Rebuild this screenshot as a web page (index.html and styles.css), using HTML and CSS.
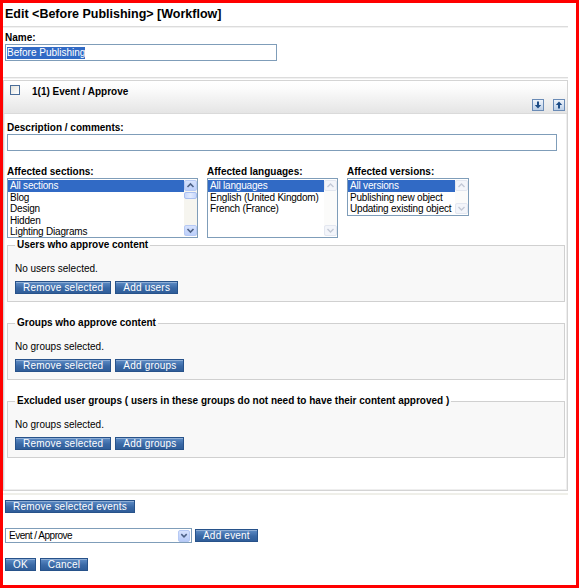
FILE: index.html
```html
<!DOCTYPE html>
<html>
<head>
<meta charset="utf-8">
<title>Edit workflow</title>
<link rel="stylesheet" href="styles.css">
</head>
<body>
<div class="page">
  <h1 class="title">Edit &lt;Before Publishing&gt; [Workflow]</h1>
  <div class="rule"></div>
  <div class="lbl name-lbl">Name:</div>
  <div class="input name-input"><span class="sel-text">Before Publishing</span></div>
  <div class="rule rule-2"></div>

  <div class="event">
    <div class="event-head">
      <div class="head-row">
        <span class="checkbox"></span>
        <span class="event-title">1(1) Event / Approve</span>
      </div>
      <div class="move-row">
        <svg class="move" width="12" height="12" viewBox="0 0 12 12">
          <defs><linearGradient id="mg1" x1="0" y1="0" x2="0" y2="1"><stop offset="0" stop-color="#f2f6fc"/><stop offset="1" stop-color="#b9cde6"/></linearGradient></defs>
          <rect x="0.5" y="0.5" width="11" height="11" fill="url(#mg1)" stroke="#6a8bb6"/>
          <path d="M5 2.5h2v3.5h2.2l-3.2 3.6-3.2-3.6h2.2z" fill="#1d4c86"/>
        </svg>
        <svg class="move" width="12" height="12" viewBox="0 0 12 12">
          <defs><linearGradient id="mg2" x1="0" y1="0" x2="0" y2="1"><stop offset="0" stop-color="#f2f6fc"/><stop offset="1" stop-color="#b9cde6"/></linearGradient></defs>
          <rect x="0.5" y="0.5" width="11" height="11" fill="url(#mg2)" stroke="#6a8bb6"/>
          <path d="M5 9.5h2v-3.5h2.2l-3.2-3.6-3.2 3.6h2.2z" fill="#1d4c86"/>
        </svg>
      </div>
    </div>

    <div class="event-body">
      <div class="lbl">Description / comments:</div>
      <div class="input desc-input"></div>

      <div class="lists">
        <div class="list-col">
          <div class="lbl">Affected sections:</div>
          <div class="listbox lb-sections">
            <div class="opts">
              <div class="opt on">All sections</div>
              <div class="opt">Blog</div>
              <div class="opt">Design</div>
              <div class="opt">Hidden</div>
              <div class="opt">Lighting Diagrams</div>
            </div>
            <div class="sb">
              <div class="sb-btn"><svg width="11" height="9" viewBox="0 0 11 9"><path d="M2.5 6L5.5 3L8.5 6" fill="none" stroke="#4d6185" stroke-width="1.6"/></svg></div>
              <div class="sb-track"><div class="sb-thumb"></div></div>
              <div class="sb-btn"><svg width="11" height="9" viewBox="0 0 11 9"><path d="M2.5 3L5.5 6L8.5 3" fill="none" stroke="#4d6185" stroke-width="1.6"/></svg></div>
            </div>
          </div>
        </div>
        <div class="list-col">
          <div class="lbl">Affected languages:</div>
          <div class="listbox lb-langs">
            <div class="opts">
              <div class="opt on">All languages</div>
              <div class="opt">English (United Kingdom)</div>
              <div class="opt">French (France)</div>
            </div>
            <div class="sb sb-off">
              <div class="sb-btn"><svg width="11" height="9" viewBox="0 0 11 9"><path d="M2.5 6L5.5 3L8.5 6" fill="none" stroke="#c3c9d6" stroke-width="1.4"/></svg></div>
              <div class="sb-track"></div>
              <div class="sb-btn"><svg width="11" height="9" viewBox="0 0 11 9"><path d="M2.5 3L5.5 6L8.5 3" fill="none" stroke="#c3c9d6" stroke-width="1.4"/></svg></div>
            </div>
          </div>
        </div>
        <div class="list-col">
          <div class="lbl">Affected versions:</div>
          <div class="listbox lb-versions">
            <div class="opts">
              <div class="opt on">All versions</div>
              <div class="opt">Publishing new object</div>
              <div class="opt">Updating existing object</div>
            </div>
            <div class="sb sb-off">
              <div class="sb-btn"><svg width="11" height="9" viewBox="0 0 11 9"><path d="M2.5 6L5.5 3L8.5 6" fill="none" stroke="#c3c9d6" stroke-width="1.4"/></svg></div>
              <div class="sb-track"></div>
              <div class="sb-btn"><svg width="11" height="9" viewBox="0 0 11 9"><path d="M2.5 3L5.5 6L8.5 3" fill="none" stroke="#c3c9d6" stroke-width="1.4"/></svg></div>
            </div>
          </div>
        </div>
      </div>

      <fieldset class="group first">
        <legend>Users who approve content</legend>
        <p class="none">No users selected.</p>
        <div class="btn-row"><span class="btn">Remove selected</span><span class="btn">Add users</span></div>
      </fieldset>
      <fieldset class="group">
        <legend>Groups who approve content</legend>
        <p class="none">No groups selected.</p>
        <div class="btn-row"><span class="btn">Remove selected</span><span class="btn">Add groups</span></div>
      </fieldset>
      <fieldset class="group">
        <legend>Excluded user groups ( users in these groups do not need to have their content approved )</legend>
        <p class="none">No groups selected.</p>
        <div class="btn-row"><span class="btn">Remove selected</span><span class="btn">Add groups</span></div>
      </fieldset>
    </div>
  </div>
  <div class="rule-3"></div>

  <div class="actions">
    <div class="btn-row"><span class="btn">Remove selected events</span></div>
    <div class="add-row">
      <div class="combo">
        <span class="combo-text">Event / Approve</span>
        <span class="combo-btn"><svg width="11" height="11" viewBox="0 0 11 11"><path d="M2.5 4L5.5 7L8.5 4" fill="none" stroke="#4d6185" stroke-width="1.6"/></svg></span>
      </div>
      <span class="btn">Add event</span>
    </div>
    <div class="btn-row ok-row"><span class="btn">OK</span><span class="btn">Cancel</span></div>
  </div>
</div>
</body>
</html>
```

FILE: styles.css
```css
* { box-sizing: border-box; }
html, body { margin: 0; padding: 0; background: #fff; }
body {
  font-family: "Liberation Sans", Arial, sans-serif;
  font-size: 10px;
  color: #000;
}
.page {
  width: 579px;
  height: 588px;
  border: 3px solid #ff0000;
  padding: 0 8px 0 0;
  overflow: hidden;
  background: #fff;
}
.title {
  margin: 3px 0 0 2px;
  height: 16px;
  font-size: 12.5px;
  line-height: 16px;
  font-weight: bold;
}
.rule {
  height: 2px;
  margin-top: 4px;
  border-top: 1px solid #dcdcdc;
  background: #f1f1f1;
}
.rule-2 { margin-top: 16px; }
.rule-3 {
  height: 2px;
  margin-top: 2px;
  background: #efefe9;
}
.lbl {
  font-weight: bold;
  line-height: 10px;
  height: 10px;
  white-space: nowrap;
}
.name-lbl { margin: 5px 0 0 2px; }
.input {
  border: 1px solid #7f9db9;
  background: #fff;
  height: 17px;
}
.name-input {
  margin: 1px 0 0 2px;
  width: 272px;
  padding: 2px 1px;
}
.sel-text {
  display: inline-block;
  height: 12px;
  line-height: 12px;
  background: #316ac5;
  color: #fff;
}
.desc-input {
  margin-top: 1px;
  width: 550px;
}

/* event box */
.event {
  margin-top: 1px;
  border: 1px solid #d4d4d4;
  box-shadow: inset 0 0 0 1px #eeeeee;
}
.event-head {
  height: 33px;
  border-bottom: 1px solid #dadada;
  background: linear-gradient(#ffffff, #fbfbfb 25%, #e5e5e5);
  padding: 4px 2px 2px 6px;
  display: flex;
  flex-direction: column;
  justify-content: space-between;
}
.head-row {
  display: flex;
  align-items: flex-start;
  height: 10px;
}
.checkbox {
  width: 10px;
  height: 10px;
  border: 1px solid #4a6d99;
  background: linear-gradient(135deg, #e2e2dc, #ffffff);
}
.event-title {
  margin-left: 12px;
  padding-top: 2px;
  font-weight: bold;
  line-height: 10px;
}
.move-row {
  display: flex;
  justify-content: flex-end;
  gap: 9px;
}
.move { display: block; }

.event-body {
  padding: 9px 0 32px 3px;
}
.lists {
  display: flex;
  gap: 9px;
  margin-top: 16px;
  align-items: flex-start;
}
.listbox {
  margin-top: 1px;
  display: flex;
  border: 1px solid #7f9db9;
  background: #fff;
  padding: 1px 0;
  overflow: hidden;
}
.lb-sections { width: 191px; height: 60px; }
.lb-langs { width: 131px; height: 60px; }
.lb-versions { width: 122px; height: 38px; }
.opts { flex: 1; min-width: 0; }
.opt {
  height: 11.5px;
  line-height: 11.5px;
  padding-left: 2px;
  letter-spacing: -0.2px;
  white-space: nowrap;
  overflow: hidden;
}
.opt.on { background: #316ac5; color: #fff; }

.sb {
  width: 13px;
  display: flex;
  flex-direction: column;
  background: #f6f5ef;
}
.sb-btn {
  height: 11px;
  display: flex;
  align-items: center;
  justify-content: center;
  background: linear-gradient(#d6e2fd, #bccffa);
  border: 1px solid #b6c9f4;
  border-radius: 2px;
}
.sb-btn svg { display: block; }
.sb-track { flex: 1; padding-top: 1px; }
.sb-thumb {
  height: 7px;
  border: 1px solid #a9bff0;
  border-radius: 2px;
  background: linear-gradient(90deg, #cbd9fb, #e2ebfe, #c6d6fb);
}
.sb-off { background: #fbfbfa; }
.sb-off .sb-btn {
  background: #f3f5fa;
  border-color: #e3e7f0;
}

/* fieldsets */
.group {
  margin: 15px 2px 0 0;
  padding: 12px 7px 7px;
  border: 1px solid #d0d0d0;
  background: #f8f8f8;
  min-width: 0;
}
.group.first { margin-top: 1px; }
.group legend {
  padding: 0 2px;
  font-weight: bold;
  line-height: 12px;
  white-space: nowrap;
}
.none {
  margin: 0;
  line-height: 12px;
}
.btn-row {
  display: flex;
  gap: 4px;
  margin-top: 6px;
}
.btn {
  display: inline-block;
  height: 13px;
  padding: 0 7px;
  border: 1px solid #27528a;
  background: linear-gradient(#5f8dc6, #3a69a6 55%, #2f5d99);
  box-shadow: inset 0 1px 0 rgba(255, 255, 255, 0.3);
  color: #fff;
  font-size: 10px;
  line-height: 11px;
  letter-spacing: 0.2px;
  white-space: nowrap;
}

/* bottom actions */
.actions { padding-left: 2px; }
.actions > .btn-row:first-child { margin-top: 5px; }
.add-row {
  display: flex;
  align-items: center;
  gap: 3px;
  margin-top: 15px;
}
.combo {
  width: 187px;
  height: 15px;
  border: 1px solid #7f9db9;
  background: #fff;
  display: flex;
  align-items: center;
  justify-content: space-between;
  padding: 0 1px 0 3px;
}
.combo-text {
  line-height: 12px;
  letter-spacing: -0.5px;
  white-space: nowrap;
}
.combo-btn {
  width: 12px;
  height: 12px;
  display: flex;
  align-items: center;
  justify-content: center;
  background: linear-gradient(#d6e2fd, #b7cbf8);
  border: 1px solid #b6c9f4;
  border-radius: 2px;
}
.combo-btn svg { display: block; }
.ok-row { margin-top: 15px; }
```
